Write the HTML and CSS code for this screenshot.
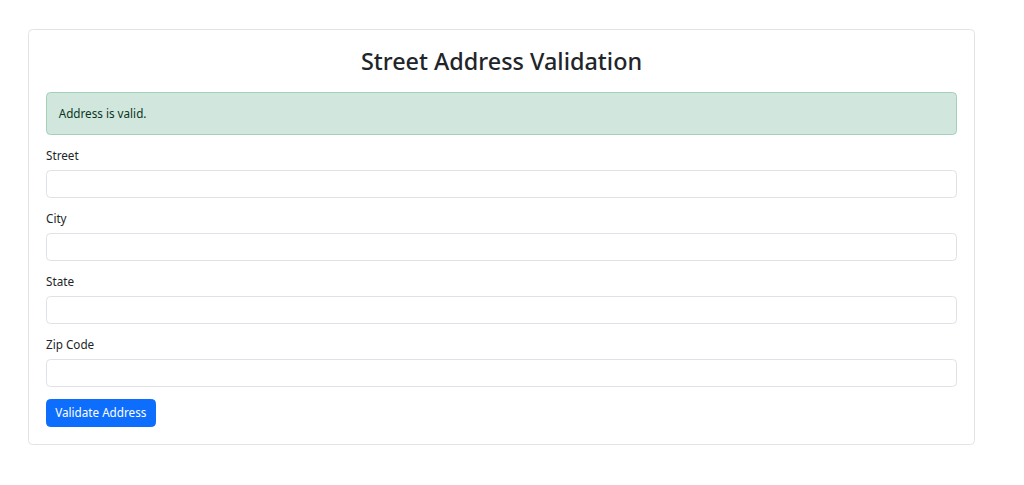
FILE: index.html
```html
<!DOCTYPE html>
<html lang="en">
<head>
<meta charset="utf-8">
<title>Street Address Validation</title>
<link rel="stylesheet" href="styles.css">
</head>
<body>
  <main class="page">
    <section class="card">
      <h2 class="card-title">Street Address Validation</h2>
      <div class="alert alert-success">Address is valid.</div>
      <form class="address-form">
        <div class="field">
          <label class="field-label" for="street">Street</label>
          <input class="field-input" id="street" type="text">
        </div>
        <div class="field">
          <label class="field-label" for="city">City</label>
          <input class="field-input" id="city" type="text">
        </div>
        <div class="field">
          <label class="field-label" for="state">State</label>
          <input class="field-input" id="state" type="text">
        </div>
        <div class="field">
          <label class="field-label" for="zip">Zip Code</label>
          <input class="field-input" id="zip" type="text">
        </div>
        <button class="btn btn-primary" type="submit">Validate Address</button>
      </form>
    </section>
  </main>
</body>
</html>
```

FILE: styles.css
```css
* {
  box-sizing: border-box;
}

html, body {
  margin: 0;
  padding: 0;
  background: #ffffff;
}

body {
  font-family: "Noto Sans", "Open Sans", "DejaVu Sans", sans-serif;
  font-size: 11.7px;
  line-height: 17.5px;
  color: #212529;
}

.page {
  padding: 29px 0 0 28px;
}

.card {
  width: 947px;
  border: 1px solid #e3e3e3;
  border-radius: 4.5px;
  padding: 17px 17px 17.5px;
  background: #fff;
}

.card-title {
  margin: 0 0 17px;
  text-align: center;
  font-size: 23.4px;
  line-height: 28px;
  font-weight: 500;
  color: #212529;
}

.alert {
  padding: 11.7px 11.7px;
  margin-bottom: 11.7px;
  border: 1px solid #a3cfbb;
  border-radius: 4.4px;
}

.alert-success {
  background: #d1e7dd;
  color: #0a3622;
}

.address-form {
  display: flex;
  flex-direction: column;
  align-items: flex-start;
}

.field {
  width: 100%;
  margin-bottom: 12px;
}

.field-label {
  display: block;
  margin-bottom: 5.5px;
}

.field-input {
  display: block;
  width: 100%;
  height: 28px;
  padding: 4.4px 8.8px;
  font: inherit;
  border: 1px solid #dee2e6;
  border-radius: 4.4px;
  background: #fff;
}

.btn {
  font: inherit;
  height: 28px;
  padding: 4.4px 8.2px;
  border: 1px solid transparent;
  border-radius: 4.4px;
  cursor: pointer;
}

.btn-primary {
  background: #0d6efd;
  border-color: #0d6efd;
  color: #fff;
}
```
